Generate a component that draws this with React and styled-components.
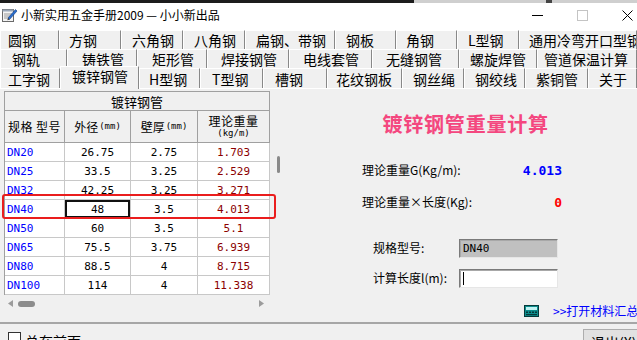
import React from 'react';
import styled, { createGlobalStyle } from 'styled-components';

const CJK = `"Noto Sans CJK SC", "Microsoft YaHei", sans-serif`;
const MONO = `"DejaVu Sans Mono", "Liberation Mono", "Noto Sans CJK SC", monospace`;

const Global = createGlobalStyle`
  html, body { margin: 0; padding: 0; background: #f0f0f0; overflow: hidden; }
  body { font-family: ${CJK}; }
  * { box-sizing: border-box; }
`;

const Window = styled.div`
  position: relative;
  width: 637px;
  height: 340px;
  overflow: hidden;
  display: flex;
  flex-direction: column;
  background: #f0f0f0;
`;

const TopStrip = styled.div`
  flex: none;
  height: 3px;
  background: linear-gradient(to right, #1c1c1c 0 414px, #cfcfcf 414px 546px, #444 546px 552px, #cfcfcf 552px);
`;

const TitleBar = styled.div`
  flex: none;
  height: 27px;
  background: #fff;
  display: flex;
  align-items: center;
  padding: 0 0 3px 1px;
`;

const TitleText = styled.span`
  margin-left: 3px;
  font: 12px/1 ${CJK};
  color: #000;
  white-space: nowrap;
`;

const Controls = styled.div`
  margin-left: auto;
  margin-right: -13px;
  display: flex;
  height: 24px;
`;

const CtrlBtn = styled.div`
  width: 45px;
  height: 100%;
  display: flex;
  align-items: center;
  justify-content: center;
`;

const TabStrip = styled.div`
  flex: none;
  display: flex;
  flex-direction: column;
`;

const TabRow = styled.div`
  display: flex;
  height: ${p => p.$h}px;
`;

const Tab = styled.div`
  flex: none;
  width: ${p => p.$w}px;
  padding-left: ${p => p.$pl}px;
  padding-bottom: ${p => (p.$sel ? 4 : 0)}px;
  font: 14px/1 ${CJK};
  color: #000;
  white-space: nowrap;
  overflow: hidden;
  display: flex;
  align-items: center;
  border-top: 1px solid #fff;
  border-left: 1px solid #fff;
  border-right: 1px solid #888;
  background: #f0f0f0;
  margin-top: ${p => (p.$sel ? -2 : 0)}px;
  margin-bottom: ${p => (p.$sel ? -1 : 0)}px;
  position: ${p => (p.$sel ? 'relative' : 'static')};
  z-index: ${p => (p.$sel ? 2 : 'auto')};
`;

const Content = styled.div`
  flex: none;
  height: 234px;
  display: flex;
  border-top: 1px solid #fff;
`;

const LeftCol = styled.div`
  flex: none;
  width: 288px;
  padding: 2px 0 0 4px;
  display: flex;
  flex-direction: column;
`;

const GridFrame = styled.div`
  display: flex;
`;

const Table = styled.div`
  width: 266px;
  display: grid;
  grid-template-columns: 60px 66px 67px 72px;
  grid-template-rows: 19px 32px;
  grid-auto-rows: 19px;
  border-left: 1px solid #a0a0a0;
  border-top: 1px solid #a0a0a0;
  background: #fff;
`;

const HeadCell = styled.div`
  grid-column: ${p => p.$span || 'auto'};
  background: #f0f0f0;
  border-right: 1px solid #a0a0a0;
  border-bottom: 1px solid #a0a0a0;
  display: flex;
  flex-direction: ${p => (p.$row ? 'row' : 'column')};
  align-items: center;
  justify-content: center;
  font: ${p => p.$fs || 12}px/1 ${CJK};
  letter-spacing: ${p => p.$ls || 0}px;
  color: #000;
  white-space: nowrap;
`;

const Unit = styled.span`
  font: 9px/1 ${MONO};
  letter-spacing: 0;
  margin-left: ${p => p.$ml || 0}px;
  margin-top: ${p => p.$mt || 0}px;
`;

const Cell = styled.div`
  border-right: 1px solid #c8c8c8;
  border-bottom: 1px solid #c8c8c8;
  display: flex;
  align-items: center;
  justify-content: ${p => (p.$left ? 'flex-start' : 'center')};
  padding-left: ${p => (p.$left ? 2 : 0)}px;
  font: 11px/1 ${MONO};
  color: ${p => p.$color || '#000'};
  white-space: nowrap;
  box-shadow: ${p => (p.$cur ? 'inset 0 0 0 2px #111' : 'none')};
`;

const VScroll = styled.div`
  width: 18px;
  padding: 65px 0 0 7px;
`;

const VThumb = styled.div`
  width: 3px;
  height: 17px;
  border-radius: 2px;
  background: #8a8a8a;
`;

const HScroll = styled.div`
  width: 266px;
  height: 17px;
  display: flex;
  align-items: center;
  padding: 0 6px 0 4px;
`;

const HThumb = styled.div`
  width: 17px;
  height: 6px;
  margin-left: 5px;
  border-radius: 3px;
  background: #8c8c8c;
`;

const RightArrow = styled.svg`
  margin-left: auto;
`;

const RightCol = styled.div`
  flex: 1;
  display: flex;
  flex-direction: column;
  align-items: flex-start;
`;

const BigTitle = styled.div`
  align-self: stretch;
  padding-left: 5px;
  margin-top: 23px;
  height: 24px;
  text-align: center;
  font: bold 20px/24px ${CJK};
  letter-spacing: 0.8px;
  color: #f4477f;
`;

const InfoRow = styled.div`
  margin-left: 74px;
  margin-top: ${p => p.$mt}px;
  width: 200px;
  height: 20px;
  display: flex;
  align-items: center;
  justify-content: space-between;
`;

const Label = styled.span`
  font: 12px/1 ${CJK};
  color: #000;
  white-space: nowrap;
  width: ${p => (p.$w ? `${p.$w}px` : 'auto')};
  flex: none;
`;

const Value = styled.span`
  font: bold 13px/1 ${MONO};
  color: ${p => p.$color};
`;

const FormRow = styled.div`
  margin-left: 85px;
  margin-top: ${p => p.$mt}px;
  height: 20px;
  display: flex;
  align-items: center;
`;

const Field = styled.div`
  width: 99px;
  height: 19px;
  background: ${p => (p.$disabled ? '#c0c0c0' : '#fff')};
  border-top: 1px solid #7a7a7a;
  border-left: 1px solid #7a7a7a;
  border-right: 1px solid #e6e6e6;
  border-bottom: 1px solid #e6e6e6;
  box-shadow: inset 1px 1px 0 #a8a8a8;
  display: flex;
  align-items: center;
  padding-left: 3px;
  font: 11px/1 ${MONO};
  color: #000;
`;

const Caret = styled.div`
  width: 1px;
  height: 13px;
  background: #000;
`;

const LinkRow = styled.div`
  margin-left: 236px;
  margin-top: 16px;
  height: 14px;
  display: flex;
  align-items: center;
  white-space: nowrap;
`;

const LinkText = styled.span`
  margin-left: 14px;
  font: 12px/1 ${CJK};
  color: #0000ff;
`;

const Footer = styled.div`
  flex: none;
  height: 40px;
  border-top: 2px solid #a6a6a6;
  display: flex;
  align-items: flex-start;
  padding-left: 8px;
`;

const CheckBox = styled.div`
  width: 13px;
  height: 13px;
  margin-top: 8px;
  border: 1px solid #333;
  background: #fff;
`;

const CheckLabel = styled.span`
  margin-left: 4px;
  margin-top: 10px;
  font: 14px/1 ${CJK};
  color: #000;
`;

const ExitBtn = styled.div`
  margin-left: auto;
  margin-right: -21px;
  margin-top: 5px;
  width: 75px;
  height: 23px;
  border: 1px solid #adadad;
  background: #e1e1e1;
  padding: 5px 0 0 7px;
  font: 14px/1 ${CJK};
  color: #000;
  white-space: nowrap;
`;

const RedMark = styled.div`
  position: absolute;
  left: 2px;
  top: 194px;
  width: 274px;
  height: 25px;
  border: 2px solid #ea1d1d;
  border-radius: 3px;
  pointer-events: none;
`;

const row1 = [
  ['圆钢', 59, 7], ['方钢', 62, 9], ['六角钢', 62, 10], ['八角钢', 62, 10],
  ['扁钢、带钢', 90, 10], ['钢板', 61, 10], ['角钢', 61, 9], ['L型钢', 62, 10],
  ['通用冷弯开口型钢', 118, 9],
];
const row2 = [
  ['钢轨', 67, 11], ['铸铁管', 70, 14], ['矩形管', 70, 14], ['焊接钢管', 82, 13],
  ['电线套管', 83, 13], ['无缝钢管', 87, 13], ['螺旋焊管', 78, 10], ['管道保温计算', 100, 6],
];
const row3 = [
  ['工字钢', 60, 7], ['镀锌钢管', 79, 11, true], ['H型钢', 61, 9], ['T型钢', 63, 11],
  ['槽钢', 64, 11], ['花纹钢板', 75, 8], ['钢丝绳', 62, 10], ['钢绞线', 61, 10],
  ['紫铜管', 63, 10], ['关于', 49, 10],
];

const data = [
  ['DN20', '26.75', '2.75', '1.703'],
  ['DN25', '33.5', '3.25', '2.529'],
  ['DN32', '42.25', '3.25', '3.271'],
  ['DN40', '48', '3.5', '4.013'],
  ['DN50', '60', '3.5', '5.1'],
  ['DN65', '75.5', '3.75', '6.939'],
  ['DN80', '88.5', '4', '8.715'],
  ['DN100', '114', '4', '11.338'],
];

const AppIcon = () => (
  <svg width="17" height="16" viewBox="0 0 17 16">
    <rect x="1.5" y="2.5" width="11" height="12" fill="#f4f4f4" stroke="#6a6a6a" />
    <rect x="1.5" y="2.5" width="11" height="2" fill="#9aa7b8" />
    <line x1="3" y1="7" x2="11" y2="7" stroke="#9a9a9a" />
    <line x1="3" y1="9" x2="11" y2="9" stroke="#9a9a9a" />
    <line x1="3" y1="11" x2="9" y2="11" stroke="#9a9a9a" />
    <path d="M7 11 L14.5 2.5 L16 4 L8.5 12.5 Z" fill="#2a6fd0" stroke="#123d80" strokeWidth="0.6" />
    <path d="M7 11 L8.5 12.5 L6.3 13.3 Z" fill="#333" />
  </svg>
);

const LinkIcon = () => (
  <svg width="15" height="12" viewBox="0 0 15 12">
    <rect x="0.5" y="0.5" width="14" height="11" fill="#0e8d8d" stroke="#063a3a" />
    <rect x="2" y="2" width="11" height="3" fill="#bff3f3" />
    <rect x="2" y="6.5" width="2" height="1.5" fill="#063a3a" />
    <rect x="5" y="6.5" width="2" height="1.5" fill="#063a3a" />
    <rect x="8" y="6.5" width="2" height="1.5" fill="#063a3a" />
    <rect x="11" y="6.5" width="2" height="1.5" fill="#063a3a" />
    <rect x="2" y="9" width="11" height="1.2" fill="#063a3a" />
  </svg>
);

export default function App() {
  return (
    <>
      <Global />
      <Window>
        <TopStrip />
        <TitleBar>
          <AppIcon />
          <TitleText>小新实用五金手册2009 — 小小新出品</TitleText>
          <Controls>
            <CtrlBtn>
              <svg width="11" height="10" viewBox="0 0 11 10"><line x1="0" y1="5.5" x2="11" y2="5.5" stroke="#000" /></svg>
            </CtrlBtn>
            <CtrlBtn>
              <svg width="11" height="11" viewBox="0 0 11 11"><rect x="0.5" y="0.5" width="10" height="10" fill="none" stroke="#c4c4c4" /></svg>
            </CtrlBtn>
            <CtrlBtn>
              <svg width="11" height="11" viewBox="0 0 11 11"><path d="M0.5 0.5 L10.5 10.5 M10.5 0.5 L0.5 10.5" stroke="#000" /></svg>
            </CtrlBtn>
          </Controls>
        </TitleBar>

        <TabStrip>
          <TabRow $h={19}>
            {row1.map(([t, w, pl]) => <Tab key={t} $w={w} $pl={pl}>{t}</Tab>)}
          </TabRow>
          <TabRow $h={19}>
            {row2.map(([t, w, pl]) => <Tab key={t} $w={w} $pl={pl}>{t}</Tab>)}
          </TabRow>
          <TabRow $h={20}>
            {row3.map(([t, w, pl, sel]) => <Tab key={t} $w={w} $pl={pl} $sel={sel}>{t}</Tab>)}
          </TabRow>
        </TabStrip>

        <Content>
          <LeftCol>
            <GridFrame>
              <Table>
                <HeadCell $span="1 / -1" $fs={13}>镀锌钢管</HeadCell>
                <HeadCell $ls={0.5}>规格 型号</HeadCell>
                <HeadCell $row>外径<Unit $ml={1}>(mm)</Unit></HeadCell>
                <HeadCell $row>壁厚<Unit $ml={1}>(mm)</Unit></HeadCell>
                <HeadCell $ls={0.5}>理论重量<Unit $mt={2}>(kg/m)</Unit></HeadCell>
                {data.map(([a, b, c, d]) => (
                  <React.Fragment key={a}>
                    <Cell $left $color="#0000ff">{a}</Cell>
                    <Cell $cur={a === 'DN40'}>{b}</Cell>
                    <Cell>{c}</Cell>
                    <Cell $color="#8b0000">{d}</Cell>
                  </React.Fragment>
                ))}
              </Table>
              <VScroll><VThumb /></VScroll>
            </GridFrame>
            <HScroll>
              <svg width="5" height="7" viewBox="0 0 5 7"><path d="M5 0 L0 3.5 L5 7 Z" fill="#9c9c9c" /></svg>
              <HThumb />
              <RightArrow width="5" height="7" viewBox="0 0 5 7"><path d="M0 0 L5 3.5 L0 7 Z" fill="#9c9c9c" /></RightArrow>
            </HScroll>
          </LeftCol>

          <RightCol>
            <BigTitle>镀锌钢管重量计算</BigTitle>
            <InfoRow $mt={24}>
              <Label>理论重量G(Kg/m):</Label>
              <Value $color="#0000ff">4.013</Value>
            </InfoRow>
            <InfoRow $mt={12}>
              <Label>理论重量×长度(Kg):</Label>
              <Value $color="#ff0000">0</Value>
            </InfoRow>
            <FormRow $mt={26}>
              <Label $w={86}>规格型号:</Label>
              <Field $disabled>DN40</Field>
            </FormRow>
            <FormRow $mt={10}>
              <Label $w={86}>计算长度l(m):</Label>
              <Field><Caret /></Field>
            </FormRow>
            <LinkRow>
              <LinkIcon />
              <LinkText>&gt;&gt;打开材料汇总</LinkText>
            </LinkRow>
          </RightCol>
        </Content>

        <Footer>
          <CheckBox />
          <CheckLabel>总在前面</CheckLabel>
          <ExitBtn>退出(X)</ExitBtn>
        </Footer>

        <RedMark />
      </Window>
    </>
  );
}
